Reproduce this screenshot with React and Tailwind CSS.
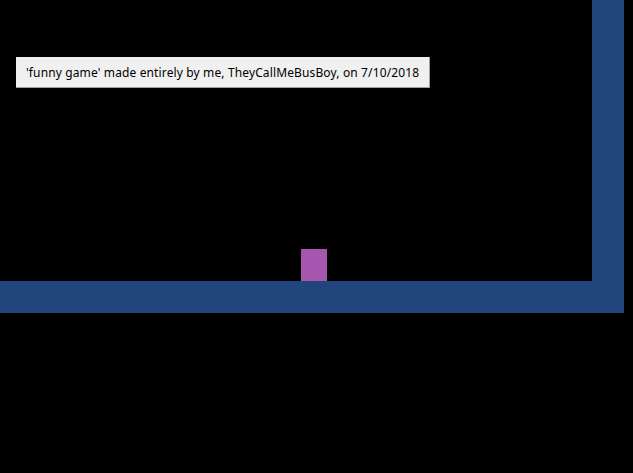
export default function App() {
  return (
    <div className="relative w-[633px] h-[473px] bg-black overflow-hidden">
      <div className="absolute left-[16px] top-[57px] w-[414px] h-[31px] bg-[#f0f0f0] border-b border-r border-[#a0a0a0] flex items-center pl-[10px] pt-[1px] text-[12px] tracking-[0.13px] text-black [font-family:'Noto_Sans',sans-serif] whitespace-nowrap">
        <span>'funny game' made entirely by me, TheyCallMeBusBoy, on 7/10/2018</span>
      </div>
      <div className="absolute left-[592px] top-0 w-[32px] h-[313px] bg-[#23457e]" />
      <div className="absolute left-0 top-[281px] w-[624px] h-[32px] bg-[#23457e]" />
      <div className="absolute left-[301px] top-[249px] w-[26px] h-[32px] bg-[#a656ae]" />
    </div>
  );
}
